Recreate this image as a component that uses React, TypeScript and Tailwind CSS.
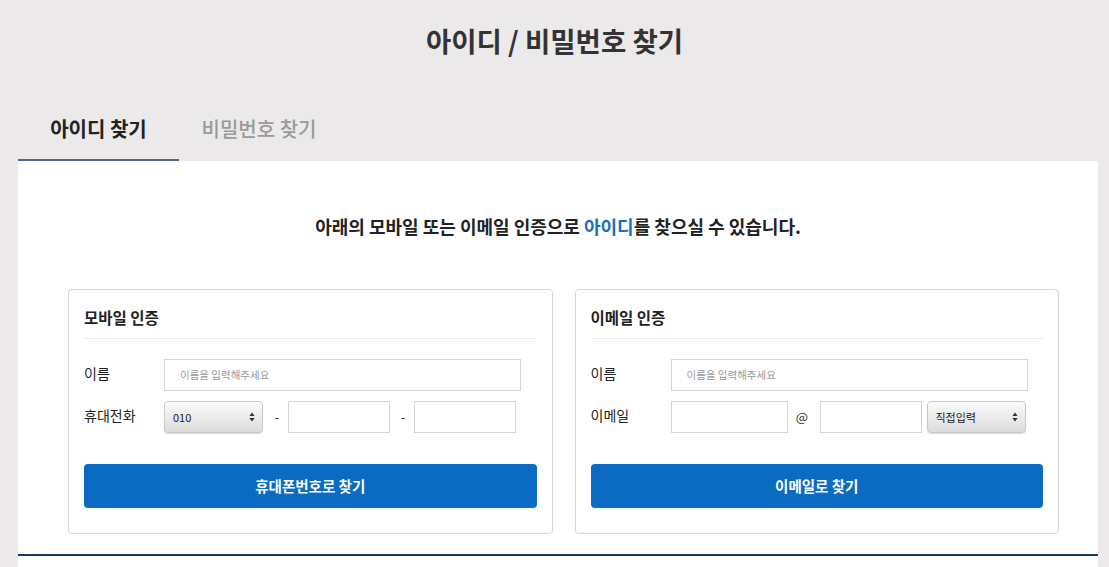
import React from "react";

const font = { fontFamily: '"Noto Sans CJK KR", "Noto Sans", sans-serif' };

function UpDown() {
  return (
    <svg width="6" height="10" viewBox="0 0 6 10" className="shrink-0">
      <path d="M3 0.5 L5.6 4 L0.4 4 Z" fill="#333" />
      <path d="M3 9.5 L5.6 6 L0.4 6 Z" fill="#333" />
    </svg>
  );
}

function FakeSelect({ label, width }: { label: string; width: string }) {
  return (
    <div
      className={`${width} h-[32px] shrink-0 rounded-[4px] border border-[#c9c9c9] bg-gradient-to-b from-[#fbfbfb] to-[#dcdcdc] shadow-[0_1px_1px_rgba(0,0,0,0.15)] flex items-center justify-between pl-[8px] pr-[7px] text-[11px] text-[#222]`}
    >
      <span>{label}</span>
      <UpDown />
    </div>
  );
}

function TextBox({ width, placeholder }: { width: string; placeholder?: string }) {
  return (
    <div className={`${width} h-[32px] shrink-0 border border-[#d4d4d4] bg-white flex items-center pl-[15px] text-[10.5px] text-[#999]`}>
      {placeholder}
    </div>
  );
}

function Card({ title, children, button }: { title: string; children: React.ReactNode; button: string }) {
  return (
    <div className="border border-[#d5d5d5] rounded-[4px] bg-white px-[15px] pt-[15px] pb-[25px]">
      <h3 className="text-[15.5px] font-bold text-[#222] leading-[24px] pb-[9px] border-b border-[#ececec]">{title}</h3>
      <div className="pt-[20px] flex flex-col gap-[10px]">{children}</div>
      <button className="mt-[31px] w-full h-[44px] rounded-[4px] bg-[#0b6bc2] text-white text-[14.5px] font-bold">
        {button}
      </button>
    </div>
  );
}

function Row({ label, children }: { label: string; children: React.ReactNode }) {
  return (
    <div className="flex items-center">
      <span className="w-[80px] text-[14px] text-[#222] -mt-[3px]">{label}</span>
      {children}
    </div>
  );
}

export default function App() {
  return (
    <div className="min-h-[567px] bg-[#ebe9ea] overflow-hidden" style={font}>
      <h1 className="pt-[20px] h-[80px] text-center text-[27.5px] font-bold text-[#333] leading-[40px]">
        아이디 / 비밀번호 찾기
      </h1>

      <div className="ml-[18px] w-[1080px]">
        {/* tabs */}
        <div className="flex h-[81px] items-end">
          <div className="w-[161px] h-[61px] flex items-start justify-center pt-[14px] border-b-2 border-[#4f6791] text-[20px] font-bold text-[#222]">
            아이디 찾기
          </div>
          <div className="w-[160px] h-[61px] flex items-start justify-center pt-[14px] text-[20px] font-medium text-[#9a9a9a]">
            비밀번호 찾기
          </div>
        </div>

        <div className="bg-white pt-[51px] pb-[12px]">
          <p className="text-center text-[18px] font-bold text-[#222] leading-[28px]">
            아래의 모바일 또는 이메일 인증으로 <span className="text-[#1a6fb8]">아이디</span>를 찾으실 수 있습니다.
          </p>

          <div className="mt-[49px] pl-[50px] pr-[39px] grid grid-cols-2 gap-[22px]">
            <Card title="모바일 인증" button="휴대폰번호로 찾기">
              <Row label="이름">
                <TextBox width="w-[357px]" placeholder="이름을 입력해주세요" />
              </Row>
              <Row label="휴대전화">
                <FakeSelect label="010" width="w-[99px]" />
                <span className="w-[25px] pl-[3px] text-center text-[13px] text-[#333]">-</span>
                <TextBox width="w-[102px]" />
                <span className="w-[24px] pl-[2px] text-center text-[13px] text-[#333]">-</span>
                <TextBox width="w-[102px]" />
              </Row>
            </Card>

            <Card title="이메일 인증" button="이메일로 찾기">
              <Row label="이름">
                <TextBox width="w-[357px]" placeholder="이름을 입력해주세요" />
              </Row>
              <Row label="이메일">
                <TextBox width="w-[117px]" />
                <span className="w-[32px] pr-[3px] text-center text-[13px] text-[#333]">@</span>
                <TextBox width="w-[102px]" />
                <span className="w-[5px]" />
                <FakeSelect label="직접입력" width="w-[99px]" />
              </Row>
            </Card>
          </div>

          <div className="mt-[20px] h-[2px] bg-[#1c3a5b]" />
          <div className="h-[40px]" />
        </div>
      </div>
    </div>
  );
}
